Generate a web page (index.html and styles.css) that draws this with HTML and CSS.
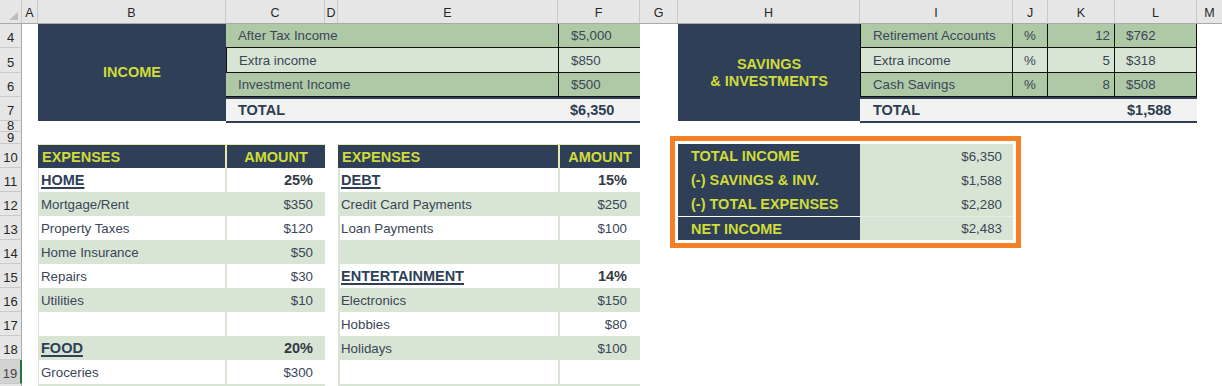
FILE: index.html
```html
<!DOCTYPE html>
<html>
<head>
<meta charset="utf-8">
<link rel="stylesheet" href="styles.css">
</head>
<body>
<div class="sheet">
  <div class="colhdr">
    <div class="corner"><span class="tri"></span></div>
    <div class="ch col-a">A</div>
    <div class="ch col-b">B</div>
    <div class="ch col-c">C</div>
    <div class="ch col-d">D</div>
    <div class="ch col-e">E</div>
    <div class="ch col-f">F</div>
    <div class="ch col-g">G</div>
    <div class="ch col-h">H</div>
    <div class="ch col-i">I</div>
    <div class="ch col-j">J</div>
    <div class="ch col-k">K</div>
    <div class="ch col-l">L</div>
    <div class="ch col-m">M</div>
  </div>
  <div class="main">
    <div class="rowhdr">
      <div class="rh">4</div>
      <div class="rh h25">5</div>
      <div class="rh">6</div>
      <div class="rh">7</div>
      <div class="rh h11">8</div>
      <div class="rh h12">9</div>
      <div class="rh">10</div>
      <div class="rh">11</div>
      <div class="rh">12</div>
      <div class="rh">13</div>
      <div class="rh">14</div>
      <div class="rh">15</div>
      <div class="rh">16</div>
      <div class="rh">17</div>
      <div class="rh">18</div>
      <div class="rh sel">19</div>
      <div class="rh">20</div>
    </div>
    <div class="cells">
      <div class="block income-title">INCOME</div>
      <div class="itable income">
        <div class="irow dark"><div class="lbl">After Tax Income</div><div class="val">$5,000</div></div>
        <div class="irow light edge"><div class="lbl">Extra income</div><div class="val">$850</div></div>
        <div class="irow dark"><div class="lbl">Investment Income</div><div class="val">$500</div></div>
        <div class="irow total"><div class="lbl">TOTAL</div><div class="val">$6,350</div></div>
      </div>

      <div class="block savings-title">SAVINGS<br>&amp; INVESTMENTS</div>
      <div class="itable savings">
        <div class="srow dark"><div class="lbl">Retirement Accounts</div><div class="pct">%</div><div class="num">12</div><div class="val">$762</div></div>
        <div class="srow light"><div class="lbl">Extra income</div><div class="pct">%</div><div class="num">5</div><div class="val">$318</div></div>
        <div class="srow dark"><div class="lbl">Cash Savings</div><div class="pct">%</div><div class="num">8</div><div class="val">$508</div></div>
        <div class="srow total"><div class="lbl">TOTAL</div><div class="pct"></div><div class="num"></div><div class="val">$1,588</div></div>
      </div>

      <div class="etable exp-left">
        <div class="erow head"><div class="hd">EXPENSES</div><div class="hd amt">AMOUNT</div></div>
        <div class="erow white"><div class="lbl"><span class="cat">HOME</span></div><div class="val strong">25%</div></div>
        <div class="erow"><div class="lbl">Mortgage/Rent</div><div class="val">$350</div></div>
        <div class="erow white"><div class="lbl">Property Taxes</div><div class="val">$120</div></div>
        <div class="erow"><div class="lbl">Home Insurance</div><div class="val">$50</div></div>
        <div class="erow white"><div class="lbl">Repairs</div><div class="val">$30</div></div>
        <div class="erow"><div class="lbl">Utilities</div><div class="val">$10</div></div>
        <div class="erow white"><div class="lbl"></div><div class="val"></div></div>
        <div class="erow"><div class="lbl"><span class="cat">FOOD</span></div><div class="val strong">20%</div></div>
        <div class="erow white"><div class="lbl">Groceries</div><div class="val">$300</div></div>
        <div class="erow"><div class="lbl"></div><div class="val"></div></div>
      </div>

      <div class="etable exp-right">
        <div class="erow head"><div class="hd">EXPENSES</div><div class="hd amt">AMOUNT</div></div>
        <div class="erow white"><div class="lbl"><span class="cat">DEBT</span></div><div class="val strong">15%</div></div>
        <div class="erow"><div class="lbl">Credit Card Payments</div><div class="val">$250</div></div>
        <div class="erow white"><div class="lbl">Loan Payments</div><div class="val">$100</div></div>
        <div class="erow"><div class="lbl"></div><div class="val"></div></div>
        <div class="erow white"><div class="lbl"><span class="cat">ENTERTAINMENT</span></div><div class="val strong">14%</div></div>
        <div class="erow"><div class="lbl">Electronics</div><div class="val">$150</div></div>
        <div class="erow white"><div class="lbl">Hobbies</div><div class="val">$80</div></div>
        <div class="erow"><div class="lbl">Holidays</div><div class="val">$100</div></div>
        <div class="erow white"><div class="lbl"></div><div class="val"></div></div>
        <div class="erow"><div class="lbl"></div><div class="val"></div></div>
      </div>

      <div class="summary">
        <div class="sumrow"><div class="slbl">TOTAL INCOME</div><div class="sval">$6,350</div></div>
        <div class="sumrow"><div class="slbl">(-) SAVINGS &amp; INV.</div><div class="sval">$1,588</div></div>
        <div class="sumrow"><div class="slbl">(-) TOTAL EXPENSES</div><div class="sval">$2,280</div></div>
        <div class="sumrow net"><div class="slbl">NET INCOME</div><div class="sval">$2,483</div></div>
      </div>
    </div>
  </div>
</div>
</body>
</html>
```

FILE: styles.css
```css
* { box-sizing: border-box; margin: 0; padding: 0; }

html, body { background: #ffffff; }

body {
  width: 1222px;
  height: 386px;
  overflow: hidden;
  font-family: "Liberation Sans", Arial, sans-serif;
  font-size: 13.3px;
  color: #3a4657;
}

.sheet {
  display: flex;
  flex-direction: column;
  width: 1222px;
}

/* ---------- column header ---------- */
.colhdr {
  display: flex;
  height: 24px;
  background: #e6e6e6;
  border-bottom: 1px solid #a9a9a9;
}

.corner {
  width: 22px;
  flex: none;
  display: flex;
  justify-content: flex-end;
  align-items: flex-end;
  padding: 0 3px 3px 0;
  border-right: 1px solid #c9c9c9;
}

.tri {
  width: 0;
  height: 0;
  border-left: 9px solid transparent;
  border-bottom: 8px solid #bdbdbd;
}

.ch {
  flex: none;
  text-align: center;
  font-size: 12.5px;
  line-height: 18px;
  padding-top: 4px;
  color: #262626;
  border-right: 1px solid #c9c9c9;
}

.col-a { width: 16px; }
.col-b { width: 188px; }
.col-c { width: 99px; }
.col-d { width: 13px; }
.col-e { width: 220px; }
.col-f { width: 82px; }
.col-g { width: 38px; }
.col-h { width: 182px; }
.col-i { width: 153px; }
.col-j { width: 35px; }
.col-k { width: 67px; }
.col-l { width: 82px; }
.col-m { flex: 1; border-right: none; }

/* ---------- body ---------- */
.main {
  display: flex;
}

.rowhdr {
  width: 22px;
  flex: none;
  display: flex;
  flex-direction: column;
}

.rh {
  height: 24px;
  background: #e6e6e6;
  border-right: 1px solid #a9a9a9;
  border-bottom: 1px solid #c9c9c9;
  display: flex;
  align-items: flex-end;
  justify-content: center;
  overflow: hidden;
  font-size: 13px;
  line-height: 14px;
  padding-bottom: 2px;
  color: #262626;
}

.rh.h25 { height: 25px; }
.rh.h11 { height: 11px; padding-bottom: 0; line-height: 10px; }
.rh.h12 { height: 12px; padding-bottom: 0; line-height: 11px; }

.rh.sel {
  background: #d2d2d2;
  border-right: 2px solid #217346;
  color: #444444;
}

.cells {
  flex: 1;
  display: grid;
  grid-template-columns:
    [a] 16px [b] 188px [c] 99px [d] 13px [e] 220px [f] 82px [g] 38px
    [h] 182px [i] 153px [j] 35px [k] 67px [l] 82px [m] 1fr [end];
  grid-template-rows:
    [r4] 24px [r5] 25px [r6] 24px [r7] 24px [r8] 11px [r9] 12px
    [r10] 24px [r11] 24px [r12] 24px [r13] 24px [r14] 24px [r15] 24px
    [r16] 24px [r17] 24px [r18] 24px [r19] 24px [r20] 24px [r21];
}

/* ---------- navy title blocks ---------- */
.block {
  background: #2e3f57;
  color: #cfdc3a;
  font-weight: bold;
  font-size: 14.5px;
  line-height: 17px;
  display: flex;
  align-items: center;
  justify-content: center;
  text-align: center;
}

.income-title { grid-column: b / c; grid-row: r4 / r8; }
.savings-title { grid-column: h / i; grid-row: r4 / r8; }

/* ---------- income / savings tables ---------- */
.itable {
  display: grid;
  grid-template-rows: 24px 25px 24px 24px;
}

.income { grid-column: c / g; grid-row: r4 / r8; }
.savings { grid-column: i / m; grid-row: r4 / r8; }

.irow, .srow {
  display: grid;
  align-items: stretch;
}

.irow { grid-template-columns: 1fr 82px; }
.srow { grid-template-columns: 153px 35px 67px 82px; }

.irow > div, .srow > div {
  display: flex;
  align-items: center;
  white-space: nowrap;
}

.dark { background: #afc9a7; }
.light { background: #d8e4d4; }

.irow.dark, .irow.light, .srow.dark, .srow.light {
  border-bottom: 1px solid #111111;
}

.irow .lbl { padding-left: 12px; }
.irow.edge .lbl { border-left: 1px solid #111111; padding-left: 12px; }
.irow .val { padding-left: 12px; border-left: 1px solid #111111; }

.srow .lbl { padding-left: 12px; border-left: 1px solid #111111; border-right: 1px solid #111111; }
.srow .pct { justify-content: center; border-right: 1px solid #111111; }
.srow .num { justify-content: flex-end; padding-right: 4px; border-right: 1px solid #111111; }
.srow .val { padding-left: 11px; border-right: 1px solid #111111; }

.irow.total, .srow.total {
  background: #f2f2f2;
  border-top: 2px solid #2e3f57;
  box-shadow: 0 2px 0 #2e3f57;
  font-weight: bold;
  font-size: 14.5px;
  color: #2e3c50;
}

.irow.total .val { border-left: none; }
.srow.total > div { border: none; }
.srow.total .lbl { padding-left: 13px; }
.srow.total .val { padding-left: 12px; }

/* ---------- expenses tables ---------- */
.etable {
  display: flex;
  flex-direction: column;
  background: #d8e4d4;
}

.exp-left { grid-column: b / d; grid-row: r10 / r21; }
.exp-right { grid-column: e / g; grid-row: r10 / r21; }

.erow {
  height: 24px;
  flex: none;
  display: grid;
  grid-template-columns: 186px 1fr;
  column-gap: 2px;
  padding-left: 1px;
}

.exp-right .erow {
  grid-template-columns: 218px 1fr;
  padding-left: 2px;
}

.erow > div {
  display: flex;
  align-items: center;
  white-space: nowrap;
}

.erow.white > div { background: #ffffff; }

.erow .lbl { padding-left: 2px; }
.exp-right .erow .lbl { padding-left: 1px; }

.erow .val { justify-content: flex-end; padding-right: 12px; }
.exp-right .erow .val { padding-right: 13px; }

.erow.head,
.exp-right .erow.head {
  background: #e5eaa9;
  border-top: 1px solid #e5eaa9;
  padding-left: 0;
  grid-template-columns: 187px 1fr;
}

.exp-right .erow.head { grid-template-columns: 220px 1fr; }

.erow .hd {
  background: #2e3f57;
  color: #cfdc3a;
  font-weight: bold;
  font-size: 14.5px;
  padding-left: 4px;
}

.erow .hd.amt {
  justify-content: center;
  padding-left: 0;
}

.cat {
  font-weight: bold;
  font-size: 14.5px;
  color: #2e3f57;
  text-decoration: underline;
  text-decoration-thickness: 1.5px;
  text-underline-offset: 2px;
}

.val.strong {
  font-weight: bold;
  font-size: 14.5px;
  color: #333a45;
}

/* ---------- summary ---------- */
.summary {
  grid-column: h / j;
  grid-row: r10 / r14;
  display: flex;
  flex-direction: column;
  outline: 5px solid #f57f25;
  outline-offset: 3px;
}

.sumrow {
  height: 24px;
  display: grid;
  grid-template-columns: 182px 1fr;
}

.sumrow > div {
  display: flex;
  align-items: center;
  white-space: nowrap;
}

.slbl {
  background: #2e3f57;
  color: #cfdc3a;
  font-weight: bold;
  font-size: 14.5px;
  padding-left: 13px;
}

.sval {
  background: #d8e4d4;
  justify-content: flex-end;
  padding-right: 11px;
}

.sumrow.net .slbl { border-top: 1px solid #ffffff; }
.sumrow.net .sval { border-top: 1px solid #e8eee6; }
```
